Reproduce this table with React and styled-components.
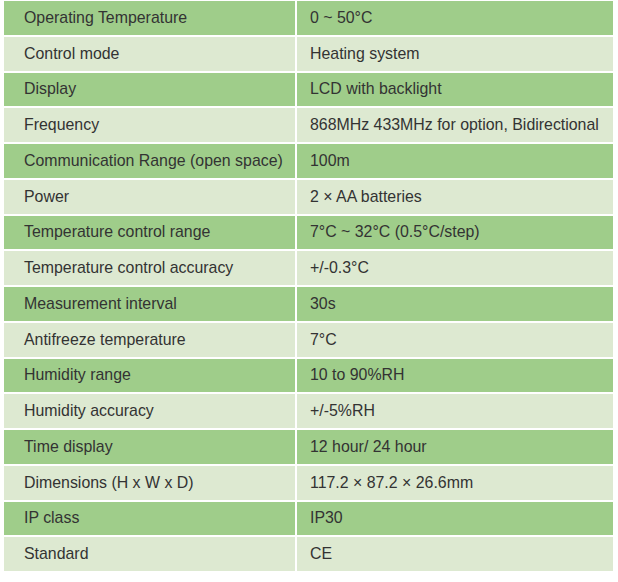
import React from "react";
import styled, { createGlobalStyle } from "styled-components";

const GlobalStyle = createGlobalStyle`
    html, body {
        margin: 0;
        padding: 0;
        background: #ffffff;
    }
`;

const Page = styled.div`
    padding: 1px 5px 0 4px;
    font-family: "Liberation Sans", Arial, sans-serif;
`;

const Table = styled.div`
    display: grid;
    grid-template-columns: 291px 316px;
    grid-auto-rows: 33.75px;
    gap: 2px;
    background: #ffffff;
`;

const Cell = styled.div`
    display: flex;
    align-items: center;
    padding-left: ${(props) => (props.first ? "20px" : "13px")};
    background-color: ${(props) => (props.dark ? "#9fcd8a" : "#dde9d1")};
    color: #333333;
    font-size: 15.9px;
    white-space: nowrap;
`;

const specs = [
    ["Operating Temperature", "0 ~ 50°C"],
    ["Control mode", "Heating system"],
    ["Display", "LCD with backlight"],
    ["Frequency", "868MHz 433MHz for option, Bidirectional"],
    ["Communication Range (open space)", "100m"],
    ["Power", "2 × AA batteries"],
    ["Temperature control range", "7°C ~ 32°C (0.5°C/step)"],
    ["Temperature control accuracy", "+/-0.3°C"],
    ["Measurement interval", "30s"],
    ["Antifreeze temperature", "7°C"],
    ["Humidity range", "10 to 90%RH"],
    ["Humidity accuracy", "+/-5%RH"],
    ["Time display", "12 hour/ 24 hour"],
    ["Dimensions (H x W x D)", "117.2 × 87.2 × 26.6mm"],
    ["IP class", "IP30"],
    ["Standard", "CE"],
];

function App() {
    return (
        <>
            <GlobalStyle />
            <Page>
                <Table>
                    {specs.map(([label, value], index) => (
                        <React.Fragment key={label}>
                            <Cell first dark={index % 2 === 0}>
                                {label}
                            </Cell>
                            <Cell dark={index % 2 === 0}>{value}</Cell>
                        </React.Fragment>
                    ))}
                </Table>
            </Page>
        </>
    );
}

export default App;
